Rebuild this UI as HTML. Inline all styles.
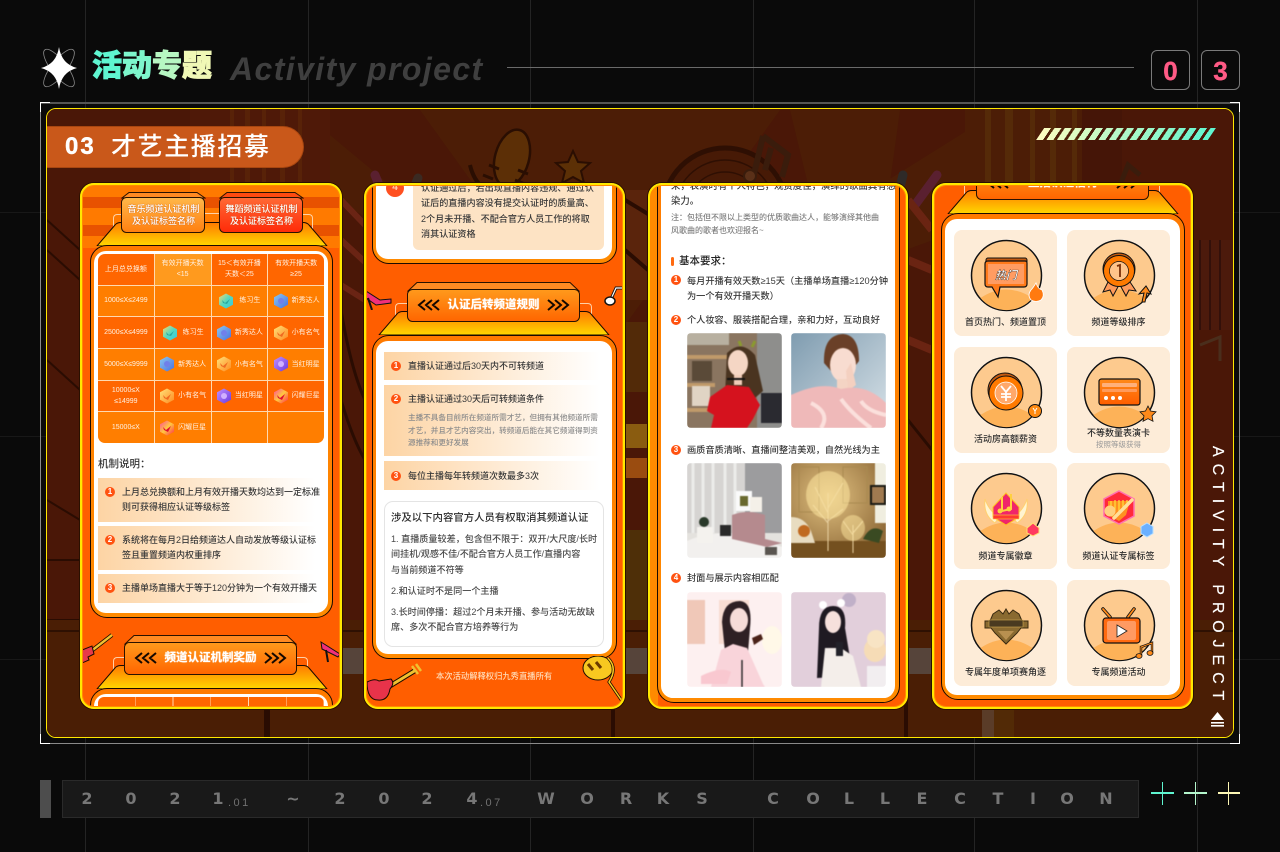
<!DOCTYPE html>
<html lang="zh-CN">
<head>
<meta charset="utf-8">
<title>活动专题 Activity project</title>
<style>
html,body{margin:0;padding:0;background:#0a0a0a}
body{position:relative;width:1280px;height:852px;overflow:hidden;font-family:"Liberation Sans","Noto Sans CJK SC",sans-serif;color:#333}
.a{position:absolute;display:block}
.v{position:absolute;width:1px;top:0;bottom:0;background:#242424}
.h{position:absolute;height:1px;left:0;right:0;background:#181818}
.clip{position:absolute;left:0;top:0;width:1280px;height:852px}
.frame{position:absolute;border:2.5px solid #ffe800;border-radius:14px;box-sizing:border-box;box-shadow:0 0 0 1px #2a1000,inset 0 0 0 1px #ff8a00;pointer-events:none}
.pn{position:absolute;box-sizing:border-box;border:1px solid #1a0a00;border-radius:17px;background:linear-gradient(#ff7a00,#ff8a00)}
.pn::after{content:"";position:absolute;left:3px;right:4px;top:5px;bottom:4px;background:#fff;border-radius:12px}
.t{position:absolute;white-space:nowrap;font-size:9px;line-height:14px;color:#3a3a3a;font-weight:500}
.n{position:absolute;width:10px;height:10px;border-radius:50%;background:#ff5210;color:#fff;font-size:8px;line-height:10px;text-align:center;font-weight:bold}
.row{position:absolute;background:linear-gradient(90deg,#fdd4a4,#fff 95%)}
.tb{position:absolute;left:98px;top:254px;width:226px;height:189px;display:grid;grid-template-columns:repeat(4,1fr);grid-template-rows:repeat(6,1fr);gap:1px;background:#ffd9b0;border-radius:7px;overflow:hidden}
.tb div{display:flex;align-items:center;justify-content:center;gap:3px;background:#ff6600;color:#fff0e0;font-size:7px;line-height:11px;text-align:center}
.tb .o{background:#ff7e00}
.tb svg{width:16px;height:16px;flex:none}
.ht{position:absolute;white-space:nowrap;color:#fff;font-weight:bold;font-size:11.5px;line-height:14px;text-align:center;text-shadow:0 0 1px #fff}
.btx{position:absolute;color:#fff;font-weight:500;font-size:9px;line-height:12px;text-align:center;white-space:nowrap;text-shadow:0 0 1px #b04000}
.card{position:absolute;width:103px;height:106px;background:#fdecd8;border-radius:8px}
.ic{position:absolute;width:80px;height:80px;overflow:visible}
.lb{position:absolute;width:103px;text-align:center;font-size:9px;line-height:12px;font-weight:500;color:#2e2e2e;white-space:nowrap}
.ph{position:absolute;border-radius:4px;overflow:hidden;width:95px;height:95px}
.ph svg{display:block;width:95px;height:95px;filter:blur(.5px)}
.w{position:absolute;color:#777;font-family:"DejaVu Sans",sans-serif;font-weight:bold;font-size:16px;line-height:18px;top:790px;transform:translateX(-50%)}
.s{position:absolute;color:#707070;font-size:11px;line-height:10px;top:798px;letter-spacing:2.5px;white-space:nowrap}
.br{position:absolute;box-sizing:border-box;border:1px solid #ffdcb8;opacity:.9}
.tl{color:#5ff5d0;-webkit-text-stroke:.9px currentColor}
</style>
</head>
<body>

<svg width="0" height="0" style="position:absolute">
<defs>
<linearGradient id="gF" x1="0" y1="0" x2="0" y2="1"><stop offset="0" stop-color="#ff9a1c"/><stop offset="1" stop-color="#ff6500"/></linearGradient>
<linearGradient id="gT" x1="0" y1="0" x2="0" y2="1"><stop offset="0" stop-color="#ff7a00"/><stop offset="1" stop-color="#ffd800"/></linearGradient>
<linearGradient id="gB1" x1="0" y1="0" x2="0" y2="1"><stop offset="0" stop-color="#ffb84a"/><stop offset="1" stop-color="#ff7f10"/></linearGradient>
<linearGradient id="gB2" x1="0" y1="0" x2="0" y2="1"><stop offset="0" stop-color="#ff6a35"/><stop offset="1" stop-color="#ff2a08"/></linearGradient>
<linearGradient id="g1" x1="0" y1="0" x2="1" y2="1"><stop offset="0" stop-color="#ffd76a"/><stop offset=".5" stop-color="#54d8c0"/><stop offset="1" stop-color="#35c8e0"/></linearGradient>
<linearGradient id="g2" x1="0" y1="0" x2="1" y2="1"><stop offset="0" stop-color="#8ac8f0"/><stop offset="1" stop-color="#4a70e0"/></linearGradient>
<linearGradient id="g3" x1="0" y1="0" x2="1" y2="1"><stop offset="0" stop-color="#ffe27a"/><stop offset="1" stop-color="#ff8a20"/></linearGradient>
<linearGradient id="g4" x1="0" y1="0" x2="1" y2="1"><stop offset="0" stop-color="#c090ff"/><stop offset="1" stop-color="#6a3ae0"/></linearGradient>
<linearGradient id="g5" x1="0" y1="0" x2="1" y2="1"><stop offset="0" stop-color="#ff4a9a"/><stop offset=".5" stop-color="#ffc840"/><stop offset="1" stop-color="#ff2a50"/></linearGradient>
<linearGradient id="gC" x1="0" y1="0" x2="0" y2="1"><stop offset="0" stop-color="#ff8a1a"/><stop offset="1" stop-color="#ff5e00"/></linearGradient>
<symbol id="hdr" viewBox="0 0 173 40">
<path d="M10 .5H163L172 9H1Z" fill="#ff8a22" stroke="#2a1200"/>
<rect x=".5" y="7.5" width="172" height="32" rx="5" fill="url(#gF)" stroke="#2a1200"/>
<path d="M18 18l-6 5 6 5M25 18l-6 5 6 5M32 18l-6 5 6 5M141 18l6 5-6 5M148 18l6 5-6 5M155 18l6 5-6 5" fill="none" stroke="#140800" stroke-width="2"/>
</symbol>
<symbol id="trap" viewBox="0 0 244 24"><path d="M7 24L25 3Q27 .5 31 .5H213Q217 .5 219 3L237 24Z" fill="url(#gT)" stroke="#1a0a00"/></symbol>
<symbol id="b1" viewBox="0 0 85 41"><path d="M8 .5H76L84 6H1Z" fill="#ff8a22" stroke="#2a1200"/><rect x=".5" y="5.5" width="83" height="35" rx="5" fill="url(#gB1)" stroke="#2a1200"/></symbol>
<symbol id="b2" viewBox="0 0 85 41"><path d="M8 .5H76L84 6H1Z" fill="#ff4a10" stroke="#2a1200"/><rect x=".5" y="5.5" width="83" height="35" rx="5" fill="url(#gB2)" stroke="#2a1200"/></symbol>
<symbol id="h1" viewBox="0 0 16 16"><path d="M8 .5L15 4.3V11.7L8 15.5L1 11.7V4.3Z" fill="url(#g1)"/><path d="M4 7l3 3 5-4-3 5-4-1Z" fill="#2aa8a0"/></symbol>
<symbol id="h2" viewBox="0 0 16 16"><path d="M8 .5L15 4.3V11.7L8 15.5L1 11.7V4.3Z" fill="url(#g2)"/><circle cx="8" cy="8" r="3" fill="#7080ea"/></symbol>
<symbol id="h3" viewBox="0 0 16 16"><path d="M8 .5L15 4.3V11.7L8 15.5L1 11.7V4.3Z" fill="url(#g3)"/><path d="M4 7l3 3 5-4-3 6-4-2Z" fill="#f06a20"/></symbol>
<symbol id="h4" viewBox="0 0 16 16"><path d="M8 .5L15 4.3V11.7L8 15.5L1 11.7V4.3Z" fill="url(#g4)"/><circle cx="8" cy="8" r="3" fill="#d0b0ff"/></symbol>
<symbol id="h5" viewBox="0 0 16 16"><path d="M8 .5L15 4.3V11.7L8 15.5L1 11.7V4.3Z" fill="url(#g5)"/><path d="M4 7l3 3 5-4-3 6-4-2Z" fill="#e01030"/></symbol>
<symbol id="base" viewBox="-1 -1 73 73"><circle cx="35.5" cy="35.5" r="36" fill="#fff"/><circle cx="35.5" cy="35.5" r="35" fill="#fdca8e" stroke="#111" stroke-width="1.5"/><path d="M9.500 58Q35 41 61.500 58A34 34 0 0 1 9.500 58Z" fill="#fdb258"/></symbol>
</defs>
</svg>

<!-- grid -->
<i class="v" style="left:85px"></i><i class="v" style="left:308px"></i><i class="v" style="left:530px"></i>
<i class="v" style="left:753px"></i><i class="v" style="left:974px"></i><i class="v" style="left:1197px"></i>
<i class="h" style="top:659px"></i><i class="h" style="top:212px"></i><i class="h" style="top:436px"></i>

<!-- header -->
<svg class="a" style="left:36px;top:44px;width:46px;height:48px" viewBox="0 0 46 48">
<ellipse cx="23" cy="24" rx="23" ry="7.500" transform="rotate(52 23 24)" fill="none" stroke="#8a8a8a" stroke-width=".8"/>
<ellipse cx="23" cy="24" rx="23" ry="7.500" transform="rotate(-52 23 24)" fill="none" stroke="#8a8a8a" stroke-width=".8"/>
<path d="M23 3Q25.500 20 41 24Q25.500 28 23 45Q20.500 28 5 24Q20.500 20 23 3Z" fill="#fff"/>
</svg>
<div class="a" style="left:92px;top:46px;font-size:30px;line-height:42px;font-weight:900;white-space:nowrap"><span class="tl">活</span><span class="tl" style="color:#7df6cc">动</span><span class="tl" style="color:#b6f7c2">专</span><span class="tl" style="color:#f0f8b6">题</span></div>
<div class="a" style="left:230px;top:49px;font-size:32px;line-height:40px;font-weight:bold;font-style:italic;letter-spacing:1.4px;color:#3f3f3f;white-space:nowrap">Activity project</div>
<i class="a" style="left:507px;top:67px;width:627px;height:1px;background:#6a6a6a"></i>
<div class="a" style="left:1151px;top:50px;width:39px;height:40px;box-sizing:border-box;border:1px solid #7a7a7a;border-radius:6px;color:#ff5a85;font-weight:bold;font-size:26px;line-height:40px;text-align:center;-webkit-text-stroke:.4px #ff5a85">0</div>
<div class="a" style="left:1201px;top:50px;width:39px;height:40px;box-sizing:border-box;border:1px solid #7a7a7a;border-radius:6px;color:#ff5a85;font-weight:bold;font-size:26px;line-height:40px;text-align:center;-webkit-text-stroke:.4px #ff5a85">3</div>

<!-- outer frame -->
<div class="a" style="left:40px;top:102px;width:1200px;height:642px;box-sizing:border-box;border:1px solid #8a8a8a;border-top:2px solid #555"></div>
<i class="a" style="left:40px;top:102px;width:10px;height:1px;background:#fff"></i><i class="a" style="left:40px;top:102px;width:1px;height:10px;background:#fff"></i>
<i class="a" style="left:1230px;top:102px;width:10px;height:1px;background:#fff"></i><i class="a" style="left:1239px;top:102px;width:1px;height:10px;background:#fff"></i>
<i class="a" style="left:40px;top:743px;width:10px;height:1px;background:#fff"></i><i class="a" style="left:40px;top:734px;width:1px;height:10px;background:#fff"></i>
<i class="a" style="left:1230px;top:743px;width:10px;height:1px;background:#fff"></i><i class="a" style="left:1239px;top:734px;width:1px;height:10px;background:#fff"></i>

<!-- main card -->
<div class="a" style="left:46px;top:108px;width:1188px;height:630px;box-sizing:border-box;border:1px solid #ffe800;border-radius:10px;background:#4a1707;overflow:hidden">
<svg class="a" style="left:-47px;top:-109px;width:1280px;height:852px" viewBox="0 0 1280 852">
<rect x="0" y="0" width="1280" height="852" fill="#4a1707"/>
<path d="M420 110L600 360 780 110ZM790 110L860 400 900 110ZM600 360L300 110H190ZM600 360L1100 180V110H1000Z" fill="#4c1d06"/>
<rect x="190" y="109" width="140" height="90" fill="#4f1908"/>
<path d="M230 109h4v80h-4zM245 109h5v80h-5zM262 109h4v80h-4zM280 109h5v80h-5zM298 109h4v80h-4z" fill="#582208"/>
<rect x="965" y="109" width="150" height="90" fill="#4c1d06"/>
<path d="M985 109h6v80h-6zM1005 109h8v80h-8zM1030 109h5v80h-5zM1050 109h6v80h-6zM1072 109h5v80h-5z" fill="#552a08"/>
<rect x="1082" y="109" width="40" height="90" fill="#451507"/>
<!-- mic -->
<g stroke="#2a0e02" stroke-width="2.500" fill="#5c2f06"><ellipse cx="512" cy="158" rx="17" ry="29" transform="rotate(15 512 158)"/></g>
<path d="M470 165Q478 200 520 195" fill="none" stroke="#2a0e02" stroke-width="4"/>
<path d="M483 175l10 4M489 165l10 4M518 170l10 4M515 180l10 4" stroke="#2a0e02" stroke-width="3"/>
<!-- star -->
<path d="M573 151l5 11 12 1-9 8 3 12-11-6-11 6 3-12-9-8 12-1Z" fill="#5c3006" stroke="#2a0e02" stroke-width="2"/>
<!-- sticks -->
<path d="M375 175l16 40" stroke="#5a2030" stroke-width="9" stroke-linecap="round"/><path d="M418 178l-16 40" stroke="#3a2a22" stroke-width="9" stroke-linecap="round"/>
<path d="M903 175l-10 40" stroke="#2e2a28" stroke-width="9" stroke-linecap="round"/><path d="M937 175l-22 30" stroke="#5a2030" stroke-width="9" stroke-linecap="round"/>
<!-- vinyl -->
<circle cx="725" cy="210" r="62" fill="#471a06" stroke="#2e0f03" stroke-width="5"/><circle cx="725" cy="210" r="50" fill="none" stroke="#2e0f03" stroke-width="1.500"/><circle cx="725" cy="210" r="38" fill="none" stroke="#2e0f03" stroke-width="1.500"/>
<!-- note -->
<path d="M763 136l25 19-6 22M763 136l-9 38M771 148l-6 22" fill="none" stroke="#3a1c0c" stroke-width="6"/><circle cx="750" cy="176" r="6" fill="#5a3018" stroke="#3a1c0c" stroke-width="2"/>
<path d="M1120 185l8-20 12 10" fill="none" stroke="#3a1c0c" stroke-width="5"/>
<!-- margins -->
<path d="M47 220L80 250M47 250L80 280M47 360L80 390M47 500L80 520" stroke="#2a0c02" stroke-width="2"/>
<path d="M341 200L365 225M341 240L365 262M341 285L365 300" stroke="#6a2414" stroke-width="6"/>
<path d="M341 310q10 60 24 90M341 400q12 40 24 60" fill="none" stroke="#2a0c02" stroke-width="3"/>
<rect x="625" y="190" width="23" height="110" fill="#5a240c"/>
<rect x="625" y="322" width="23" height="70" fill="#522a08"/>
<path d="M625 200l23 14M625 250l23 20" stroke="#2a0c02" stroke-width="4"/>
<rect x="622" y="424" width="26" height="24" fill="#8a5c10"/><rect x="622" y="458" width="26" height="20" fill="#9a4c10"/>
<rect x="625" y="530" width="23" height="100" fill="#4e2f08"/>
<path d="M908 200l24 30M908 260l24 10M908 340l24 10" stroke="#6a2412" stroke-width="8"/>
<path d="M908 420l24 30" stroke="#2a0c02" stroke-width="3"/>
<path d="M1193 240h40v90h-40z" fill="#4c1a0c"/>
<path d="M1200 240v90M1210 240v90M1220 240v90" stroke="#33100a" stroke-width="2"/>
<path d="M1200 345l20-8v24" fill="none" stroke="#4a2e1c" stroke-width="3"/>
<path d="M47 560h33M47 620h33" stroke="#2a0c02" stroke-width="2"/>
<!-- floor -->
<rect x="47" y="620" width="1186" height="120" fill="#4a1e05"/>
<rect x="341" y="648" width="620" height="26" fill="#56443a"/>
<rect x="47" y="630" width="1186" height="2" fill="#2e1002"/>
<path d="M264 700h6v40h-6zM611 700h4v40h-4zM904 700h4v40h-4z" fill="#2a0c02"/>
<rect x="982" y="700" width="12" height="40" fill="#5a3c28"/>
<rect x="994" y="700" width="20" height="40" fill="#522a06"/>
</svg>
</div>

<!-- band -->
<div class="a" style="left:47px;top:126px;width:257px;height:42px;box-sizing:border-box;background:#c9581a;border:1px solid #a84610;border-left:none;border-radius:0 21px 21px 0"></div>
<div class="a" style="left:65px;top:130px;font-size:24px;line-height:34px;font-weight:bold;color:#fff;letter-spacing:2px;-webkit-text-stroke:.4px #fff">03</div>
<div class="a" style="left:111px;top:129px;font-size:25px;line-height:36px;color:#fff;letter-spacing:1.6px;font-weight:500;white-space:nowrap">才艺主播招募</div>
<div class="a" style="left:1040px;top:128px;width:172px;height:12px;transform:skewX(-34deg);background:linear-gradient(90deg,#fdfcc0,#5ff5d0);-webkit-mask-image:repeating-linear-gradient(90deg,#000 0 7px,transparent 7px 10.400px);mask-image:repeating-linear-gradient(90deg,#000 0 7px,transparent 7px 10.400px)"></div>

<!-- PHONE 1 -->
<div class="clip" style="clip-path:inset(183px 938px 143px 80px round 13px)">
<i class="a" style="left:80px;top:183px;width:262px;height:526px;background:#ff5e00"></i>
<i class="a" style="left:80px;top:183px;width:262px;height:14px;background:#ff7a00"></i>
<i class="a" style="left:80px;top:197px;width:262px;height:11px;background:#e85200"></i>
<i class="a" style="left:80px;top:208px;width:262px;height:17px;background:#ff7a00"></i>
<i class="a" style="left:80px;top:225px;width:262px;height:11px;background:#e85200"></i>
<i class="a" style="left:80px;top:236px;width:262px;height:12px;background:#ff7a00"></i>
<i class="br" style="left:113px;top:214px;width:9px;height:24px;border-right:none;border-bottom:none;border-radius:4px 0 0 0"></i>
<i class="br" style="left:205px;top:213px;width:14px;height:1px;border-width:1px 0 0"></i>
<i class="br" style="left:303px;top:214px;width:10px;height:24px;border-left:none;border-bottom:none;border-radius:0 4px 0 0"></i>
<svg class="a" style="left:90px;top:222px;width:244px;height:24px"><use href="#trap"/></svg>
<svg class="a" style="left:121px;top:192px;width:85px;height:41px"><use href="#b1"/></svg>
<svg class="a" style="left:219px;top:192px;width:85px;height:41px"><use href="#b2"/></svg>
<div class="btx" style="left:121px;top:203px;width:85px">音乐频道认证机制<br>及认证标签名称</div>
<div class="btx" style="left:219px;top:203px;width:85px">舞蹈频道认证机制<br>及认证标签名称</div>
<div class="pn" style="left:90px;top:245px;width:243px;height:373px"></div>
<div class="tb">
<div>上月总兑换额</div><div style="background:#ff9a1e">有效开播天数<br>&lt;15</div><div>15＜有效开播<br>天数＜25</div><div>有效开播天数<br>≥25</div>
<div class="o">1000≤X≤2499</div><div class="o"></div><div class="o"><svg><use href="#h1"/></svg>&nbsp;练习生</div><div class="o"><svg><use href="#h2"/></svg>新秀达人</div>
<div>2500≤X≤4999</div><div><svg><use href="#h1"/></svg>&nbsp;练习生</div><div><svg><use href="#h2"/></svg>新秀达人</div><div><svg><use href="#h3"/></svg>小有名气</div>
<div class="o">5000≤X≤9999</div><div class="o"><svg><use href="#h2"/></svg>新秀达人</div><div class="o"><svg><use href="#h3"/></svg>小有名气</div><div class="o"><svg><use href="#h4"/></svg>当红明星</div>
<div>10000≤X<br>≤14999</div><div><svg><use href="#h3"/></svg>小有名气</div><div><svg><use href="#h4"/></svg>当红明星</div><div><svg><use href="#h5"/></svg>闪耀巨星</div>
<div class="o">15000≤X</div><div class="o"><svg><use href="#h5"/></svg>闪耀巨星</div><div class="o"></div><div class="o"></div>
</div>
<div class="t" style="left:98px;top:457px;font-size:10.500px;color:#333">机制说明：</div>
<div class="row" style="left:98px;top:478px;width:229px;height:44px"></div>
<div class="row" style="left:98px;top:526px;width:229px;height:44px"></div>
<div class="row" style="left:98px;top:574px;width:229px;height:29px"></div>
<div class="n" style="left:105px;top:487px">1</div><div class="n" style="left:105px;top:535px">2</div><div class="n" style="left:105px;top:583px">3</div>
<div class="t" style="left:122px;top:485px;line-height:15px">上月总兑换额和上月有效开播天数均达到一定标准<br>则可获得相应认证等级标签</div>
<div class="t" style="left:122px;top:533px;line-height:15px">系统将在每月2日给频道达人自动发放等级认证标<br>签且重置频道内权重排序</div>
<div class="t" style="left:122px;top:581px;line-height:15px">主播单场直播大于等于120分钟为一个有效开播天</div>
<!-- guitar + heel -->
<svg class="a" style="left:82px;top:630px;width:34px;height:34px" viewBox="0 0 34 34"><path d="M8 22L30 5" stroke="#1a0a00" stroke-width="4"/><path d="M8 22L30 5" stroke="#f0c030" stroke-width="2.400"/><path d="M0 20l10-4 2 8-6 3 1 3-7 3Z" fill="#e83a4a" stroke="#1a0a00"/></svg>
<svg class="a" style="left:320px;top:640px;width:22px;height:24px" viewBox="0 0 22 24"><path d="M1 2L20 14 18 17 2 9Z" fill="#f0307a" stroke="#111"/><path d="M6 10L8 22" stroke="#111" stroke-width="2"/></svg>
<i class="br" style="left:113px;top:657px;width:11px;height:25px;border-right:none;border-bottom:none;border-radius:4px 0 0 0"></i>
<i class="br" style="left:297px;top:657px;width:11px;height:25px;border-left:none;border-bottom:none;border-radius:0 4px 0 0"></i>
<svg class="a" style="left:90px;top:665px;width:244px;height:24px"><use href="#trap"/></svg>
<svg class="a" style="left:124px;top:635px;width:173px;height:40px"><use href="#hdr"/></svg>
<div class="ht" style="left:124px;top:651px;width:173px">频道认证机制奖励</div>
<div class="pn" style="left:90px;top:688px;width:243px;height:60px"></div>
<i class="a" style="left:98px;top:697px;width:226px;height:14px;border-radius:6px 6px 0 0;background:repeating-linear-gradient(90deg,#ff6600 0 37px,#ffd9b0 37px 37.700px)"></i>
</div>
<div class="frame" style="left:80px;top:183px;width:262px;height:526px"></div>

<!-- PHONE 2 -->
<div class="clip" style="clip-path:inset(183px 655px 143px 364px round 13px)">
<i class="a" style="left:364px;top:183px;width:261px;height:526px;background:#ff5e00"></i>
<div class="pn" style="left:372px;top:100px;width:245px;height:164px"></div>
<i class="a" style="left:413px;top:170px;width:191px;height:80px;background:#fde3c4;border-radius:6px"></i>
<div class="a" style="left:386px;top:179px;width:18px;height:18px;border-radius:50%;background:#ff5020;color:#ffd0b0;font-size:10px;line-height:18px;text-align:center;font-weight:bold">4</div>
<div class="t" style="left:421px;top:181px;font-size:9.100px;line-height:15.400px">认证通过后，若出现直播内容违规、通过认<br>证后的直播内容没有提交认证时的质量高、<br>2个月未开播、不配合官方人员工作的将取<br>消其认证资格</div>
<svg class="a" style="left:366px;top:288px;width:28px;height:22px" viewBox="0 0 28 22"><path d="M0 3L14 12 25 11 25 15 10 17 0 10Z" fill="#f0307a" stroke="#111"/><path d="M2 10L6 22" stroke="#111" stroke-width="2"/></svg>
<svg class="a" style="left:604px;top:286px;width:20px;height:22px" viewBox="0 0 20 22"><path d="M18 2H12L7 13" fill="none" stroke="#111" stroke-width="3"/><path d="M18 2H12L7 13" fill="none" stroke="#fff" stroke-width="1.200"/><ellipse cx="6" cy="15" rx="5" ry="4" fill="#fff" stroke="#111" stroke-width="1.500"/></svg>
<i class="br" style="left:395px;top:303px;width:13px;height:25px;border-right:none;border-bottom:none;border-radius:4px 0 0 0"></i>
<i class="br" style="left:579px;top:303px;width:13px;height:25px;border-left:none;border-bottom:none;border-radius:0 4px 0 0"></i>
<svg class="a" style="left:372px;top:311px;width:244px;height:24px"><use href="#trap"/></svg>
<svg class="a" style="left:407px;top:282px;width:173px;height:40px"><use href="#hdr"/></svg>
<div class="ht" style="left:407px;top:298px;width:173px">认证后转频道规则</div>
<div class="pn" style="left:372px;top:335px;width:245px;height:324px"></div>
<div class="row" style="left:384px;top:352px;width:227px;height:28px"></div>
<div class="row" style="left:384px;top:385px;width:227px;height:71px"></div>
<div class="row" style="left:384px;top:461px;width:227px;height:29px"></div>
<div class="n" style="left:391px;top:361px">1</div><div class="n" style="left:391px;top:394px">2</div><div class="n" style="left:391px;top:471px">3</div>
<div class="t" style="left:408px;top:359px">直播认证通过后30天内不可转频道</div>
<div class="t" style="left:408px;top:392px">主播认证通过30天后可转频道条件</div>
<div class="t" style="left:408px;top:412px;font-size:7.600px;line-height:12.600px;color:#8c8c8c">主播不具备目前所在频道所需才艺，但拥有其他频道所需<br>才艺，并且才艺内容突出，转频道后能在其它频道得到资<br>源推荐和更好发展</div>
<div class="t" style="left:408px;top:469px">每位主播每年转频道次数最多3次</div>
<div class="a" style="left:384px;top:501px;width:220px;height:146px;box-sizing:border-box;border:1px solid #e4e4e4;border-radius:9px;background:#fff"></div>
<div class="t" style="left:391px;top:512px;font-size:10.400px;color:#2e2e2e">涉及以下内容官方人员有权取消其频道认证</div>
<div class="t" style="left:391px;top:532px;font-size:9.100px;line-height:15.300px;color:#4a4a4a">1. 直播质量较差，包含但不限于：双开/大尺度/长时<br>间挂机/观感不佳/不配合官方人员工作/直播内容<br>与当前频道不符等</div>
<div class="t" style="left:391px;top:584px;font-size:9.100px;color:#4a4a4a">2.和认证时不是同一个主播</div>
<div class="t" style="left:391px;top:605px;font-size:9.100px;line-height:15.300px;color:#4a4a4a">3.长时间停播：超过2个月未开播、参与活动无故缺<br>席、多次不配合官方培养等行为</div>
<div class="t" style="left:436px;top:669px;font-size:8.300px;color:#ffdcb8">本次活动解释权归九秀直播所有</div>
<svg class="a" style="left:366px;top:662px;width:56px;height:46px" viewBox="0 0 56 46"><path d="M14 30L50 8" stroke="#1a0a00" stroke-width="5"/><path d="M14 30L50 8" stroke="#f0c030" stroke-width="3"/><path d="M46 4l6 8M50 2l5 7" stroke="#f0c030" stroke-width="2.500"/><path d="M1 20q8-4 12-1l12-2q4 4-1 10-2 12-12 11Q1 38 1 20Z" fill="#e8334a" stroke="#1a0a00"/></svg>
<svg class="a" style="left:582px;top:656px;width:42px;height:54px" viewBox="0 0 42 54"><ellipse cx="16" cy="12" rx="15" ry="12" fill="#f8c820" stroke="#1a0a00"/><path d="M26 2q10 10 1 24L42 48" fill="none" stroke="#1a0a00" stroke-width="3"/><path d="M26 2q10 10 1 24L42 48" fill="none" stroke="#f8c820" stroke-width="1.500"/><path d="M6 8l5 6M14 6l5 6" stroke="#6a3a00" stroke-width="3"/></svg>
</div>
<div class="frame" style="left:364px;top:183px;width:261px;height:526px"></div>

<!-- PHONE 3 -->
<div class="clip" style="clip-path:inset(183px 372px 143px 648px round 13px)">
<i class="a" style="left:648px;top:183px;width:260px;height:526px;background:#ff5e00"></i>
<i class="a" style="left:650px;top:183px;width:8px;height:526px;background:#ff8a00"></i>
<div class="pn" style="left:657px;top:100px;width:243px;height:603px"></div>
<i class="a" style="left:663px;top:150px;width:231px;height:548px;background:#fff;border-radius:10px"></i>
<div class="t" style="left:671px;top:178px;font-size:9.400px;line-height:15px">来，表演时有个人特色，观赏度佳，演绎的歌曲具有感<br>染力。</div>
<div class="t" style="left:671px;top:211px;font-size:8px;line-height:13px;color:#808080">注：包括但不限以上类型的优质歌曲达人，能够演绎其他曲<br>风歌曲的歌者也欢迎报名~</div>
<i class="a" style="left:671px;top:257px;width:3px;height:9px;border-radius:1.500px;background:#ff6a10"></i>
<div class="t" style="left:679px;top:254px;font-size:10.500px;color:#222">基本要求：</div>
<div class="n" style="left:671px;top:275px">1</div><div class="n" style="left:671px;top:315px">2</div><div class="n" style="left:671px;top:445px">3</div><div class="n" style="left:671px;top:573px">4</div>
<div class="t" style="left:687px;top:274px;font-size:9.200px;line-height:14.500px">每月开播有效天数≥15天（主播单场直播≥120分钟<br>为一个有效开播天数）</div>
<div class="t" style="left:687px;top:313px;font-size:9.200px">个人妆容、服装搭配合理，亲和力好，互动良好</div>
<div class="t" style="left:687px;top:443px;font-size:9.200px">画质音质清晰、直播间整洁美观，自然光线为主</div>
<div class="t" style="left:687px;top:571px;font-size:9.200px">封面与展示内容相匹配</div>

<div class="ph" style="left:687px;top:333px"><svg viewBox="0 0 95 95">
<rect width="95" height="95" fill="#8a7560"/><rect x="70" width="25" height="95" fill="#8e8e8c"/><rect x="0" y="0" width="42" height="12" fill="#b8b0a0"/><rect x="0" y="22" width="45" height="4" fill="#c09a6a"/><rect x="0" y="50" width="28" height="4" fill="#c09a6a"/><rect x="0" y="75" width="24" height="4" fill="#c09a6a"/><rect x="5" y="28" width="20" height="20" fill="#5a4a38"/><rect x="5" y="53" width="18" height="20" fill="#e0d4c4"/><rect x="74" y="60" width="21" height="30" fill="#2a2a30"/><path d="M40 20Q54 6 68 22L76 58 60 72 38 62Z" fill="#4a3420"/><ellipse cx="51" cy="30" rx="10" ry="13" fill="#f5d6c4"/><rect x="47" y="42" width="8" height="10" fill="#f0ccb8"/><path d="M40 46h18" stroke="#111" stroke-width="2"/><path d="M23 64L40 52 62 54 73 72 66 86 60 95H24L27 82 20 78Z" fill="#d5121e"/><path d="M52 8l2 5M68 8l-3 6" stroke="#8a9a30" stroke-width="3"/>
</svg></div>
<div class="ph" style="left:791px;top:333px"><svg viewBox="0 0 95 95">
<defs><linearGradient id="i2" x1="0" y1="0" x2="1" y2="1"><stop offset="0" stop-color="#7f9cb0"/><stop offset="1" stop-color="#d8e2e8"/></linearGradient></defs>
<rect width="95" height="95" fill="url(#i2)"/><path d="M33 30Q32 2 52 1 68 2 68 28L62 36 40 38Z" fill="#6a4028"/><ellipse cx="52" cy="32" rx="13" ry="17" fill="#f8dcd0"/><rect x="46" y="46" width="11" height="12" fill="#f4d4c4"/><path d="M60 30l5 22-8 6-2-20Z" fill="#f4d0c0"/><path d="M0 62Q30 48 50 56 75 50 95 70V95H0Z" fill="#efb9b9"/><path d="M20 70q20 10 10 25M50 66q10 14 30 29M70 68q6 10 25 14" stroke="#fbe0dc" stroke-width="4" fill="none"/>
</svg></div>
<div class="ph" style="left:687px;top:463px"><svg viewBox="0 0 95 95">
<rect width="95" height="95" fill="#d6d4d2"/><rect x="58" width="37" height="80" fill="#9c9c9e"/><path d="M6 0v70M16 0v70M26 0v70M38 0v70M48 0v70" stroke="#ececea" stroke-width="3"/><rect x="0" y="70" width="95" height="25" fill="#e4e2de"/><path d="M0 78Q40 60 95 84V95H0Z" fill="#f2f0ee"/><rect x="49" y="28" width="16" height="20" fill="#fafafa"/><rect x="53" y="33" width="8" height="10" fill="#6a6a30"/><rect x="63" y="34" width="12" height="15" fill="#f4f0e8"/><path d="M45 52Q60 46 78 52L78 76 95 80 80 84 45 76Z" fill="#b58a8e"/><rect x="10" y="64" width="16" height="16" fill="#f4f2ee"/><circle cx="17" cy="59" r="5" fill="#2a3a2a"/><rect x="33" y="62" width="11" height="11" fill="#2a2a2a"/><rect x="78" y="84" width="12" height="8" fill="#5a5550"/>
</svg></div>
<div class="ph" style="left:791px;top:463px"><svg viewBox="0 0 95 95">
<defs><radialGradient id="i4" cx=".4" cy=".35" r=".7"><stop offset="0" stop-color="#e0c080"/><stop offset="1" stop-color="#8f6a38"/></radialGradient></defs>
<rect width="95" height="95" fill="url(#i4)"/><rect x="8" y="4" width="20" height="45" fill="none" stroke="#a98a50"/><rect x="52" y="4" width="24" height="36" fill="none" stroke="#a98a50"/><rect x="84" width="11" height="60" fill="#f0eee0"/><rect x="79" y="22" width="16" height="20" fill="#1a1a14"/><rect x="81" y="24" width="12" height="16" fill="#a07a50"/><rect x="0" y="78" width="95" height="17" fill="#74501f"/><path d="M37 88V30M37 50L24 24M37 45L52 20M37 60L22 42M37 58L52 46M62 90V62M62 72L52 58M62 70L72 58" stroke="#e8d0a0" stroke-width="1"/><ellipse cx="37" cy="32" rx="22" ry="24" fill="#ffe7a0" opacity=".55"/><ellipse cx="62" cy="65" rx="12" ry="13" fill="#ffe7a0" opacity=".5"/><path d="M0 54Q14 54 20 68L24 80H0Z" fill="#e8dcc0"/><circle cx="13" cy="68" r="6" fill="#c06a20"/><path d="M72 76q8-16 20-8l-4 12Z" fill="#3a4a22"/>
</svg></div>
<div class="ph" style="left:687px;top:592px"><svg viewBox="0 0 95 95">
<rect width="95" height="95" fill="#fdf0f0"/><rect x="0" y="8" width="18" height="44" fill="#f0c8b8"/><rect x="32" y="8" width="30" height="44" fill="#f8dcd2"/><ellipse cx="85" cy="48" rx="10" ry="14" fill="#fff8e8"/><path d="M35 30Q36 9 53 9 66 10 63 36L61 60H38Z" fill="#2e2024"/><ellipse cx="52" cy="28" rx="9" ry="12" fill="#f6dcd8"/><path d="M24 95L34 58 46 52 60 56 76 92 78 95Z" fill="#f9d4da"/><path d="M14 84Q34 74 44 80L40 92 14 92Z" fill="#f9c8d0"/><path d="M65 46l9-4 2 5-9 6Z" fill="#4a2218"/><path d="M55 68v27" stroke="#222" stroke-width="1.400"/>
</svg></div>
<div class="ph" style="left:791px;top:592px"><svg viewBox="0 0 95 95">
<rect width="95" height="95" fill="#e2cfdb"/><circle cx="58" cy="8" r="7" fill="#c0b0c8"/><path d="M28 36Q28 14 42 14 56 14 54 36L62 84 26 86Z" fill="#1f1a22"/><ellipse cx="42" cy="30" rx="8" ry="11" fill="#f6e0dc"/><path d="M30 95L34 56 50 56 62 64 70 95Z" fill="#f4eeea"/><rect x="45" y="50" width="7" height="14" fill="#22222a"/><circle cx="32" cy="13" r="4" fill="#fff"/><circle cx="50" cy="11" r="4" fill="#fff"/><ellipse cx="84" cy="58" rx="11" ry="12" fill="#f6dcb6"/><circle cx="85" cy="47" r="9" fill="#f8e4c4"/><rect x="76" y="74" width="19" height="21" fill="#f2eef0"/>
</svg></div>
</div>
<div class="frame" style="left:648px;top:183px;width:260px;height:526px"></div>

<!-- PHONE 4 -->
<div class="clip" style="clip-path:inset(183px 87px 143px 932px round 13px)">
<i class="a" style="left:932px;top:183px;width:261px;height:526px;background:#ff5e00"></i>
<i class="br" style="left:964px;top:181px;width:12px;height:25px;border-right:none;border-top:none"></i>
<i class="br" style="left:1148px;top:181px;width:12px;height:25px;border-left:none;border-top:none"></i>
<svg class="a" style="left:941px;top:190px;width:244px;height:24px"><use href="#trap"/></svg>
<svg class="a" style="left:976px;top:160px;width:173px;height:40px"><use href="#hdr"/></svg>
<div class="ht" style="left:976px;top:176px;width:173px">主播认证福利</div>
<div class="pn" style="left:941px;top:213px;width:244px;height:487px"></div>

<div class="card" style="left:954px;top:230px"></div><div class="card" style="left:1067px;top:230px"></div>
<div class="card" style="left:954px;top:347px"></div><div class="card" style="left:1067px;top:347px"></div>
<div class="card" style="left:954px;top:463px"></div><div class="card" style="left:1067px;top:463px"></div>
<div class="card" style="left:954px;top:580px"></div><div class="card" style="left:1067px;top:580px"></div>

<!-- icon 1 hot -->
<svg class="ic" style="left:971px;top:240px" viewBox="0 0 80 80"><svg x="-1" y="-1" width="73" height="73"><use href="#base"/></svg>
<rect x="15" y="18" width="41" height="6" rx="2" fill="#c45a10" stroke="#111"/><path d="M17 21H54Q56 21 56 23V44Q56 47 53 47H29L27 57 21 47H17Q14 47 14 44V24Q14 21 17 21Z" fill="#ff7a1a" stroke="#111" stroke-width="1.200"/><rect x="17" y="24" width="36" height="20" fill="#ff9c62"/>
<text x="35" y="39" text-anchor="middle" font-size="11" font-weight="bold" font-style="italic" fill="#fff" stroke="#111" stroke-width=".3" font-family="Noto Sans CJK SC,sans-serif">热门</text>
<path d="M65 43Q67 49 71 50 74 56 70 60 65 63 60 60 56 55 60 50 62 48 65 43Z" fill="#ff7a10" stroke="#fff" stroke-width=".8"/></svg>
<!-- icon 2 medal -->
<svg class="ic" style="left:1084px;top:240px" viewBox="0 0 80 80"><svg x="-1" y="-1" width="73" height="73"><use href="#base"/></svg>
<path d="M24 42L19 52 26 50 29 56 35 45ZM46 42L52 51 45 50 42 56 36 45Z" fill="#ff9a5a" stroke="#111"/><circle cx="35" cy="29" r="16" fill="#c45a10" stroke="#111"/><circle cx="35" cy="31" r="15.500" fill="#ff7a00" stroke="#111"/><circle cx="35" cy="31" r="9.500" fill="#ffc48a" stroke="#111" stroke-width=".7"/><path d="M33 26l3-1v12" fill="none" stroke="#7a3008" stroke-width="1.800"/>
<path d="M58 62l2-9-5 1 7-8 5 8-4-1-2 9Z" fill="#ff8a1a" stroke="#111"/></svg>
<!-- icon 3 coin -->
<svg class="ic" style="left:971px;top:357px" viewBox="0 0 80 80"><svg x="-1" y="-1" width="73" height="73"><use href="#base"/></svg>
<circle cx="34" cy="33" r="17" fill="#c45a10" stroke="#111"/><circle cx="35" cy="36" r="17" fill="#ff7a00" stroke="#111"/><circle cx="35" cy="36" r="11" fill="#ffa86a" stroke="#fff" stroke-width=".8"/><path d="M30 29l5 6 5-6M35 35v9M30 37h10M30 40h10" fill="none" stroke="#fff" stroke-width="1.800"/>
<circle cx="64" cy="54" r="6.500" fill="#ff8a10" stroke="#111"/><path d="M62 51l2 3 2-3M64 54v3" stroke="#fff" fill="none"/></svg>
<!-- icon 4 card -->
<svg class="ic" style="left:1084px;top:357px" viewBox="0 0 80 80"><svg x="-1" y="-1" width="73" height="73"><use href="#base"/></svg>
<rect x="15" y="22" width="41" height="26" rx="2.500" fill="url(#gC)" stroke="#111" stroke-width="1.200"/><rect x="18" y="26" width="35" height="4" rx="1" fill="#ffb07a"/><rect x="18" y="32" width="35" height="3" rx="1" fill="#ff9a5a"/><circle cx="22" cy="41" r="2" fill="#fff"/><circle cx="29" cy="41" r="2" fill="#fff"/><circle cx="36" cy="41" r="2" fill="#fff"/>
<path d="M64 49l2.500 5 5.500.8-4 4 1 5.500-5-2.600-5 2.600 1-5.500-4-4 5.500-.8Z" fill="#ff8a1a" stroke="#111" stroke-width=".8"/></svg>
<!-- icon 5 badge -->
<svg class="ic" style="left:971px;top:473px" viewBox="0 0 80 80"><svg x="-1" y="-1" width="73" height="73"><use href="#base"/></svg>
<path d="M14 26Q12 42 24 50L28 44Q18 38 14 26ZM56 26Q58 42 46 50L42 44Q52 38 56 26Z" fill="#fff4d0" stroke="#ffd070"/><path d="M22 34L35 20 48 34V44L35 52 22 44Z" fill="#f0256a" stroke="#ffc020"/><path d="M31 24v14l9-2V21" fill="none" stroke="#ffd040" stroke-width="2"/><circle cx="29" cy="38" r="2.500" fill="#ffd040"/><circle cx="38" cy="36" r="2.500" fill="#ffd040"/><rect x="22" y="42" width="26" height="4" fill="#ff3a30" stroke="#ffd040" stroke-width=".6"/>
<path d="M56 55l6-5 6 5v5l-6 3-6-3Z" fill="#ff3a60" stroke="#ffe070"/></svg>
<!-- icon 6 hex -->
<svg class="ic" style="left:1084px;top:473px" viewBox="0 0 80 80"><svg x="-1" y="-1" width="73" height="73"><use href="#base"/></svg>
<path d="M35 18L50 26V43L35 51 20 43V26Z" fill="#ff2a3a" stroke="#ff70b0" stroke-width="1.500"/><path d="M24 28h22l-4 14-7 6-11-6Z" fill="#ff9020"/><path d="M27 28v6M31 27v10M35 27v12M39 27v8M43 27v6" stroke="#ffe040" stroke-width="1.200"/><circle cx="26" cy="38" r="5.500" fill="#ffd080"/><path d="M30 45L48 27" stroke="#ffdf9a" stroke-width="3.500" stroke-linecap="round"/>
<path d="M63 50l6 3.500v7L63 64l-6-3.500v-7Z" fill="#6ab0ff" stroke="#b8e0ff"/></svg>
<!-- icon 7 diamond -->
<svg class="ic" style="left:971px;top:590px" viewBox="0 0 80 80"><svg x="-1" y="-1" width="73" height="73"><use href="#base"/></svg>
<path d="M22 24L28 20 32 24 35 19 38 24 42 20 48 24 51 31H57V38H50L46 43 35 54 24 43 20 38H14V31H19Z" fill="#8a6a30" stroke="#3a2a10"/><rect x="18" y="30" width="34" height="7" fill="#4a3a20" stroke="#d0a850" stroke-width=".6"/><path d="M27 41h16l-8 9Z" fill="#b89050"/></svg>
<!-- icon 8 tv -->
<svg class="ic" style="left:1084px;top:590px" viewBox="0 0 80 80"><svg x="-1" y="-1" width="73" height="73"><use href="#base"/></svg>
<path d="M26 27L19 19M44 27L50 19" stroke="#111" stroke-width="3.500" stroke-linecap="round"/><path d="M26 27L19 19M44 27L50 19" stroke="#ff8a1a" stroke-width="1.800" stroke-linecap="round"/><rect x="19" y="28" width="37" height="25" rx="3" fill="#ff6a10" stroke="#111" stroke-width="1.200"/><rect x="23" y="31" width="29" height="19" rx="2" fill="#ff9a62"/><path d="M33 35L43 41 33 47Z" fill="#fff" stroke="#222" stroke-width=".8"/>
<path d="M57 66V57L68 53V63" fill="none" stroke="#111" stroke-width="2.400"/><path d="M57 66V57L68 53V63" fill="none" stroke="#ff8a1a" stroke-width="1"/><ellipse cx="55" cy="66" rx="3" ry="2.400" fill="#ff8a1a" stroke="#111" stroke-width=".8"/><ellipse cx="66" cy="63" rx="3" ry="2.400" fill="#ff8a1a" stroke="#111" stroke-width=".8"/></svg>

<div class="lb" style="left:954px;top:316px">首页热门、频道置顶</div>
<div class="lb" style="left:1067px;top:316px">频道等级排序</div>
<div class="lb" style="left:954px;top:433px">活动房高额薪资</div>
<div class="lb" style="left:1067px;top:427px">不等数量表演卡</div>
<div class="lb" style="left:1067px;top:439px;font-size:7.500px;font-weight:400;color:#999">按照等级获得</div>
<div class="lb" style="left:954px;top:550px">频道专属徽章</div>
<div class="lb" style="left:1067px;top:550px">频道认证专属标签</div>
<div class="lb" style="left:954px;top:666px">专属年度单项赛角逐</div>
<div class="lb" style="left:1067px;top:666px">专属频道活动</div>
</div>
<div class="frame" style="left:932px;top:183px;width:261px;height:526px"></div>

<!-- vertical text -->
<div class="a" style="left:1208px;top:446px;writing-mode:vertical-rl;font-size:16px;line-height:18px;letter-spacing:6.900px;color:#fff;white-space:nowrap;-webkit-text-stroke:.2px #fff">ACTIVITY PROJECT</div>
<svg class="a" style="left:1210px;top:711px;width:15px;height:16px" viewBox="0 0 15 16"><path d="M7.500 1L14 9H1Z" fill="#fff"/><rect x="1" y="11" width="13" height="1.600" fill="#fff"/><rect x="1" y="14" width="13" height="1.600" fill="#fff"/></svg>

<!-- footer -->
<i class="a" style="left:40px;top:780px;width:11px;height:38px;background:#4d4d4d"></i>
<div class="a" style="left:62px;top:780px;width:1077px;height:38px;box-sizing:border-box;background:#191919;border:1px solid #2a2a2a"></div>
<span class="w" style="left:87px">2</span><span class="w" style="left:131px">0</span><span class="w" style="left:175px">2</span><span class="w" style="left:218px">1</span>
<span class="s" style="left:228px">.01</span>
<span class="w" style="left:293px">~</span>
<span class="w" style="left:340px">2</span><span class="w" style="left:384px">0</span><span class="w" style="left:427px">2</span><span class="w" style="left:472px">4</span>
<span class="s" style="left:480px">.07</span>
<span class="w" style="left:546px">W</span><span class="w" style="left:587px">O</span><span class="w" style="left:626px">R</span><span class="w" style="left:663px">K</span><span class="w" style="left:702px">S</span>
<span class="w" style="left:773px">C</span><span class="w" style="left:813px">O</span><span class="w" style="left:849px">L</span><span class="w" style="left:885px">L</span><span class="w" style="left:922px">E</span><span class="w" style="left:960px">C</span><span class="w" style="left:998px">T</span><span class="w" style="left:1033px">I</span><span class="w" style="left:1067px">O</span><span class="w" style="left:1106px">N</span>

<i class="a" style="left:1151px;top:792px;width:23px;height:2px;background:#5ff5d0"></i><i class="a" style="left:1162px;top:782px;width:1px;height:23px;background:#5ff5d0"></i>
<i class="a" style="left:1184px;top:792px;width:23px;height:2px;background:#b4f6cc"></i><i class="a" style="left:1195px;top:782px;width:1px;height:23px;background:#b4f6cc"></i>
<i class="a" style="left:1218px;top:792px;width:22px;height:2px;background:#fdf7b5"></i><i class="a" style="left:1228px;top:782px;width:1px;height:23px;background:#fdf7b5"></i>

</body>
</html>
